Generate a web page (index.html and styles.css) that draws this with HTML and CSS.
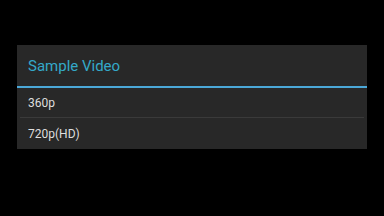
FILE: index.html
```html
<!DOCTYPE html>
<html lang="en">
<head>
    <meta charset="UTF-8"/>
    <link rel="stylesheet" href="styles.css">
</head>
<body>
<main class="screen">
    <section class="dialog">
        <header class="dialog__title">Sample Video</header>
        <ul class="dialog__list">
            <li class="dialog__item">360p</li>
            <li class="dialog__item">720p(HD)</li>
        </ul>
    </section>
</main>
</body>
</html>
```

FILE: styles.css
```css
html, body {
    margin: 0;
    height: 100%;
    background-color: #000000;
}

.screen {
    display: flex;
    justify-content: center;
    padding-top: 45px;
    font-family: Roboto, "Noto Sans", sans-serif;
}

.dialog {
    width: 350px;
    background-color: #282828;
}

.dialog__title {
    height: 41px;
    padding-left: 11px;
    display: flex;
    align-items: center;
    font-size: 15px;
    color: #34a9c9;
    border-bottom: 2px solid #4ba8d8;
}

.dialog__list {
    list-style: none;
    margin: 0;
    padding: 0;
}

.dialog__item {
    height: 29px;
    margin: 0 3px;
    padding-left: 8px;
    display: flex;
    align-items: center;
    font-size: 12px;
    color: #dedede;
}

.dialog__item + .dialog__item {
    height: 31px;
    border-top: 1px solid #3a3a3a;
}
```
